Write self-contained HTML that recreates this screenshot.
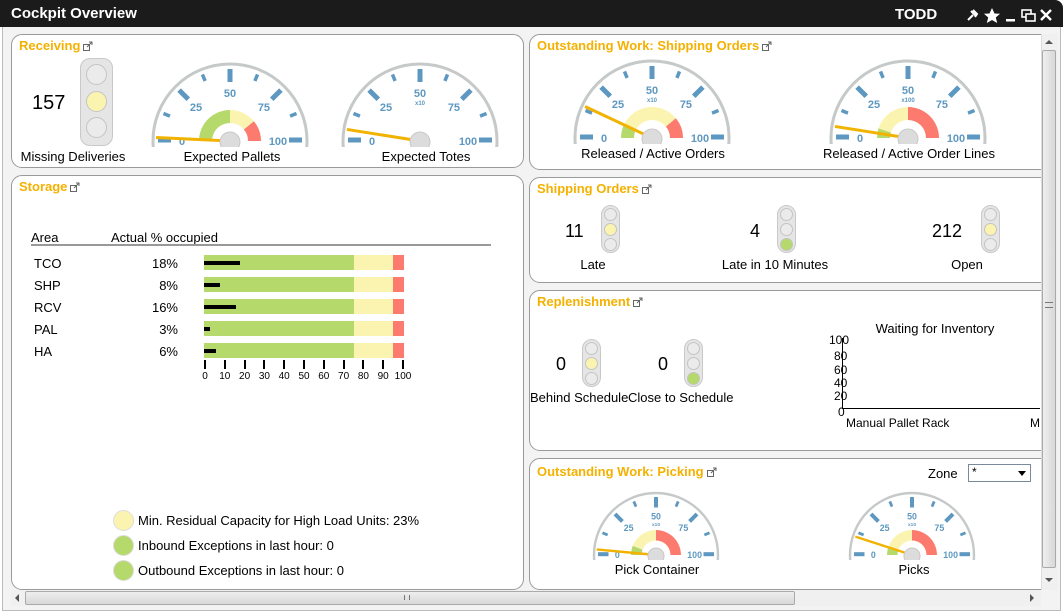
<!DOCTYPE html>
<html><head><meta charset="utf-8">
<style>
*{margin:0;padding:0;box-sizing:border-box}
body{width:1063px;height:613px;overflow:hidden;background:#fff;font-family:"Liberation Sans",Arial,sans-serif;position:relative;color:#000}
.abs{position:absolute}
#top{left:0;top:0;width:1063px;height:27px;background:#1b1b1b;border-radius:0 8px 0 0}
#frame{left:2px;top:27px;width:1059px;height:584px;background:#f3f3f3;border:1px solid #bbb;border-top:none}
.panel{position:absolute;background:#fff;border:1px solid #9a9a9a;border-radius:11px;overflow:hidden}
.ttl{position:absolute;left:7px;top:3px;color:#f5b100;font-weight:bold;font-size:13px;white-space:nowrap}
.ttl svg{vertical-align:-1px;margin-left:3px}
.t{position:absolute;white-space:nowrap;font-size:13px}
.c{transform:translateX(-50%)}
.tl{position:absolute;background:#e5e5e5;border:1px solid #c9c9c9;border-radius:10px}
.dot{position:absolute;border-radius:50%;border:1px solid #c4c4c4;background:#ebebeb}
.y{background:#fbf4b0}.g{background:#b5d96b}
</style></head><body>
<div id="top" class="abs"></div>
<div class="abs" style="left:11px;top:5px;color:#fff;font-weight:bold;font-size:15px">Cockpit Overview</div>
<div class="abs" style="left:895px;top:6px;color:#fff;font-weight:bold;font-size:15px">TODD</div>
<svg class="abs" style="left:964px;top:6px" width="95" height="18" viewBox="0 0 95 18">
<path d="M4 14 L9 9 M7 5 L12 10 M9 4 L13 8 L11 11" stroke="#fff" stroke-width="2" fill="none"/>
<polygon points="28,2 30.5,7.5 36,7.8 31.8,11.5 33.2,17 28,14 22.8,17 24.2,11.5 20,7.8 25.5,7.5" fill="#fff"/>
<rect x="42" y="13" width="9" height="2.5" fill="#fff"/>
<rect x="58" y="4" width="9" height="7" stroke="#fff" stroke-width="1.6" fill="none"/>
<rect x="62" y="8" width="9" height="7" stroke="#fff" stroke-width="1.6" fill="#1b1b1b"/>
<path d="M77 4 L87 14 M87 4 L77 14" stroke="#fff" stroke-width="2.4"/>
</svg>
<div id="frame" class="abs"></div>

<div class="panel" style="left:11px;top:34px;width:513px;height:134px">
 <div class="ttl">Receiving<svg width="10" height="10"><rect x="0.5" y="3.5" width="6" height="6" fill="#fff" stroke="#666"/><path d="M4 6 L9 1 M6 1h3v3" stroke="#666" fill="none"/></svg></div>
</div>
<div class="t" style="left:32px;top:92px;font-size:20px">157</div>
<div class="tl" style="left:80px;top:58px;width:33px;height:88px"></div>
<div class="dot" style="left:86px;top:64px;width:21px;height:21px"></div>
<div class="dot y" style="left:86px;top:91px;width:21px;height:21px"></div>
<div class="dot" style="left:86px;top:117px;width:21px;height:21px"></div>
<div class="t c" style="left:73px;top:149px">Missing Deliveries</div>
<div class="t c" style="left:232px;top:149px">Expected Pallets</div>
<div class="t c" style="left:426px;top:149px">Expected Totes</div>

<div class="panel" style="left:11px;top:175px;width:513px;height:415px">
 <div class="ttl">Storage<svg width="10" height="10"><rect x="0.5" y="3.5" width="6" height="6" fill="#fff" stroke="#666"/><path d="M4 6 L9 1 M6 1h3v3" stroke="#666" fill="none"/></svg></div>
</div>
<div class="t" style="left:31px;top:230px">Area</div>
<div class="t" style="left:111px;top:230px">Actual % occupied</div>
<div class="abs" style="left:31px;top:244px;width:460px;height:2px;background:#999"></div>
<div id="rows"></div>
<div class="abs" style="left:113px;top:510px;width:21px;height:21px;border-radius:50%;background:#fbf4b0;border:1px solid #ddd"></div>
<div class="abs" style="left:113px;top:535px;width:21px;height:21px;border-radius:50%;background:#b5d96b;border:1px solid #ddd"></div>
<div class="abs" style="left:113px;top:560px;width:21px;height:21px;border-radius:50%;background:#b5d96b;border:1px solid #ddd"></div>
<div class="t" style="left:138px;top:513px">Min. Residual Capacity for High Load Units: 23%</div>
<div class="t" style="left:138px;top:538px">Inbound Exceptions in last hour: 0</div>
<div class="t" style="left:138px;top:563px">Outbound Exceptions in last hour: 0</div>

<div class="abs" style="left:529px;top:30px;width:512px;height:561px;overflow:hidden">
 <div class="panel" style="left:0;top:4px;width:530px;height:136px"><div class="ttl">Outstanding Work: Shipping Orders<svg width="10" height="10"><rect x="0.5" y="3.5" width="6" height="6" fill="#fff" stroke="#666"/><path d="M4 6 L9 1 M6 1h3v3" stroke="#666" fill="none"/></svg></div></div>
 <div class="panel" style="left:0;top:147px;width:530px;height:106px"><div class="ttl">Shipping Orders<svg width="10" height="10"><rect x="0.5" y="3.5" width="6" height="6" fill="#fff" stroke="#666"/><path d="M4 6 L9 1 M6 1h3v3" stroke="#666" fill="none"/></svg></div></div>
 <div class="panel" style="left:0;top:260px;width:530px;height:161px"><div class="ttl">Replenishment<svg width="10" height="10"><rect x="0.5" y="3.5" width="6" height="6" fill="#fff" stroke="#666"/><path d="M4 6 L9 1 M6 1h3v3" stroke="#666" fill="none"/></svg></div></div>
 <div class="panel" style="left:0;top:428px;width:530px;height:132px"><div class="ttl" style="top:5px">Outstanding Work: Picking<svg width="10" height="10"><rect x="0.5" y="3.5" width="6" height="6" fill="#fff" stroke="#666"/><path d="M4 6 L9 1 M6 1h3v3" stroke="#666" fill="none"/></svg></div></div>
</div>
<div class="t c" style="left:653px;top:146px">Released / Active Orders</div>
<div class="t c" style="left:909px;top:146px">Released / Active Order Lines</div>

<div class="t" style="left:565px;top:221px;font-size:18px">11</div>
<div class="t" style="left:750px;top:221px;font-size:18px">4</div>
<div class="t" style="left:932px;top:221px;font-size:18px">212</div>
<div id="small"></div>
<div class="t c" style="left:593px;top:257px">Late</div>
<div class="t c" style="left:775px;top:257px">Late in 10 Minutes</div>
<div class="t c" style="left:967px;top:257px">Open</div>

<div class="t" style="left:556px;top:354px;font-size:18px">0</div>
<div class="t" style="left:658px;top:354px;font-size:18px">0</div>
<div class="t" style="left:530px;top:390px">Behind Schedule</div>
<div class="t" style="left:628px;top:390px">Close to Schedule</div>

<div class="t c" style="left:935px;top:321px">Waiting for Inventory</div>
<div class="abs" style="left:842px;top:338px;width:1px;height:71px;background:#000"></div>
<div class="abs" style="left:842px;top:408px;width:198px;height:1px;background:#000"></div>
<div class="t" style="left:829px;top:333px;font-size:12px">100</div>
<div class="t" style="left:834px;top:349px;font-size:12px">80</div>
<div class="t" style="left:834px;top:363px;font-size:12px">60</div>
<div class="t" style="left:834px;top:376px;font-size:12px">40</div>
<div class="t" style="left:834px;top:389px;font-size:12px">20</div>
<div class="t" style="left:838px;top:405px;font-size:12px">0</div>
<div class="t" style="left:846px;top:416px;font-size:12px">Manual Pallet Rack</div>
<div class="t" style="left:1030px;top:416px;font-size:12px">M</div>

<div class="t" style="left:928px;top:466px">Zone</div>
<div class="abs" style="left:968px;top:464px;width:63px;height:18px;border:1px solid #7a8a9a;background:#fff;font-size:12px;padding-left:3px">*<span style="position:absolute;right:4px;top:6px;border-left:4px solid transparent;border-right:4px solid transparent;border-top:5px solid #000"></span></div>
<div class="t c" style="left:657px;top:562px">Pick Container</div>
<div class="t c" style="left:914px;top:562px">Picks</div>

<div class="abs" style="left:1041px;top:34px;width:17px;height:556px;background:#f0f0f0;border-left:1px solid #ddd"></div>
<div class="abs" style="left:1042px;top:50px;width:14px;height:518px;background:linear-gradient(90deg,#eee,#d8d8d8);border:1px solid #aaa;border-radius:2px"></div>
<div class="abs" style="left:1045px;top:302px;width:8px;height:6px;border-top:1px solid #777;border-bottom:1px solid #777"></div>
<div class="abs" style="left:1045px;top:40px;border-left:4px solid transparent;border-right:4px solid transparent;border-bottom:4px solid #555"></div>
<div class="abs" style="left:1045px;top:578px;border-left:4px solid transparent;border-right:4px solid transparent;border-top:4px solid #555"></div>
<div class="abs" style="left:11px;top:590px;width:1030px;height:16px;background:#f0f0f0"></div>
<div class="abs" style="left:25px;top:591px;width:770px;height:14px;background:linear-gradient(#eee,#d8d8d8);border:1px solid #aaa;border-radius:2px"></div>
<div class="abs" style="left:404px;top:595px;width:6px;height:5px;border-left:1px solid #777;border-right:1px solid #777"></div>
<div class="abs" style="left:15px;top:594px;border-top:4px solid transparent;border-bottom:4px solid transparent;border-right:4px solid #555"></div>
<div class="abs" style="left:1030px;top:594px;border-top:4px solid transparent;border-bottom:4px solid transparent;border-left:4px solid #555"></div>

<svg id="g" class="abs" style="left:0;top:0" width="1063" height="613"></svg>

<script>
var NS="http://www.w3.org/2000/svg",svg=document.getElementById('g');
function el(t,a,p){var e=document.createElementNS(NS,t);for(var k in a)e.setAttribute(k,a[k]);(p||svg).appendChild(e);return e;}
function pt(cx,cy,r,v){var a=Math.PI*(1-v/100);return [cx+r*Math.cos(a),cy-r*Math.sin(a)];}
function band(g,cx,cy,r1,r2,v1,v2,col){var a=pt(cx,cy,r2,v1),b=pt(cx,cy,r2,v2),c=pt(cx,cy,r1,v2),d=pt(cx,cy,r1,v1);
 el('path',{d:'M'+a+' A'+r2+' '+r2+' 0 0 1 '+b+' L'+c+' A'+r1+' '+r1+' 0 0 0 '+d+'Z',fill:col},g);}
var cid=0;
function gauge(cx,cy,R,clipY,bands,needle,mult){
 var s=R/77;cid++;
 var cpth=el('clipPath',{id:'c'+cid});
 el('rect',{x:cx-R-5,y:cy-R-5,width:2*R+10,height:clipY-(cy-R-5)},cpth);
 var g=el('g',{'clip-path':'url(#c'+cid+')'});
 el('circle',{cx:cx,cy:cy,r:R,fill:'#fff',stroke:'#c6c9c9','stroke-width':3*s},g);
 for(var i=0;i<=8;i++){var v=i*12.5,maj=i%2==0;var r1=maj?R-18*s:R-12*s,r2=R-5*s;
  var oy=(i==0||i==8)?-1*s:0;
  var a=pt(cx,cy+oy,r1,v),b=pt(cx,cy+oy,r2,v);
  el('line',{x1:a[0],y1:a[1],x2:b[0],y2:b[1],stroke:'#5e98c0','stroke-width':(maj?5:3.5)*s},g);}
 [0,25,50,75,100].forEach(function(l){var r=R-29*s;var p=pt(cx,cy,r,l);
  var t=el('text',{x:p[0],y:p[1]+4*s,'text-anchor':'middle','font-size':11*s,'font-weight':'bold',fill:'#5e98c0','font-family':'Liberation Sans'},g);t.textContent=l;});
 if(mult){var t=el('text',{x:cx,y:cy-36*s,'text-anchor':'middle','font-size':6*s,'font-weight':'bold',fill:'#5e98c0','font-family':'Liberation Sans'},g);t.textContent=mult;}
 bands.forEach(function(b){band(g,cx,cy,18*s,31*s,b[0],b[1],b[2]);});
 var p=pt(cx,cy,R-3*s,needle);
 el('line',{x1:cx,y1:cy,x2:p[0],y2:p[1],stroke:'#f2b300','stroke-width':3*s},g);
 el('circle',{cx:cx,cy:cy+1,r:10*s,fill:'#dcdcdc',stroke:'#c8c8c8'},g);
}
var G='#b5d96b',Y='#fbf4b0',Rd='#fd7b6e';
gauge(230,141,77,147,[[0,50,G],[50,78,Y],[78,100,Rd]],1.5,'');
gauge(420,141,77,147,[],5,'x10');
gauge(652,138,77,144,[[0,15,G],[15,78,Y],[78,100,Rd]],14,'x10');
gauge(908,138,77,144,[[0,10,G],[10,50,Y],[50,100,Rd]],5,'x100');
gauge(656,555,62,560,[[0,12,G],[12,50,Y],[50,100,Rd]],3,'x10');
gauge(912,555,62,560,[[0,10,G],[10,50,Y],[50,100,Rd]],10,'x10');

function small(x,y,lit,col){var h='<div class="tl" style="left:'+x+'px;top:'+y+'px;width:19px;height:48px"></div>';
 for(var i=0;i<3;i++)h+='<div class="dot'+(i==lit?' '+col:'')+'" style="left:'+(x+3)+'px;top:'+(y+3+i*15)+'px;width:13px;height:13px"></div>';return h;}
document.getElementById('small').innerHTML=small(601,205,1,'y')+small(777,205,2,'g')+small(981,205,1,'y')+small(582,339,1,'y')+small(684,339,2,'g');

var rows=[['TCO','18%',18],['SHP','8%',8],['RCV','16%',16],['PAL','3%',3],['HA','6%',6]],h='';
rows.forEach(function(r,i){var y=255+i*22;
 h+='<div class="t" style="left:34px;top:'+(y+1)+'px">'+r[0]+'</div>';
 h+='<div class="t" style="left:140px;top:'+(y+1)+'px;width:38px;text-align:right">'+r[1]+'</div>';
 h+='<div class="abs" style="left:204px;top:'+y+'px;width:150px;height:15px;background:#b5d96b"></div>';
 h+='<div class="abs" style="left:354px;top:'+y+'px;width:39px;height:15px;background:#fbf4b0"></div>';
 h+='<div class="abs" style="left:393px;top:'+y+'px;width:11px;height:15px;background:#fd7b6e"></div>';
 h+='<div class="abs" style="left:204px;top:'+(y+6)+'px;width:'+(r[2]*2)+'px;height:4px;background:#000"></div>';});
for(var i=0;i<=10;i++){var x=205+i*19.8;h+='<div class="abs" style="left:'+(x-1)+'px;top:360px;width:2px;height:9px;background:#000"></div>';
 h+='<div class="t c" style="left:'+x+'px;top:371px;font-size:10px">'+(i*10)+'</div>';}
document.getElementById('rows').innerHTML=h;
</script>
</body></html>
